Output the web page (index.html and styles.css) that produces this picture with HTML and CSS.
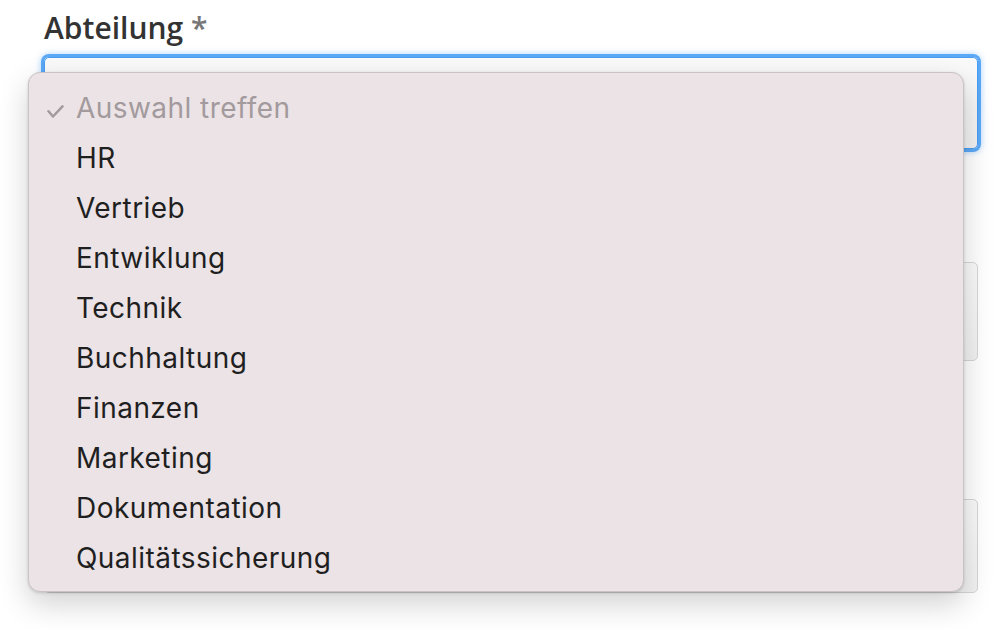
FILE: index.html
```html
<!DOCTYPE html>
<html lang="de">
<head>
<meta charset="utf-8">
<title>Abteilung</title>
<link rel="stylesheet" href="styles.css">
</head>
<body>
<form class="form">
  <div class="field">
    <label class="label">Abteilung <span class="req">*</span></label>
    <div class="box box-focus"></div>
  </div>
  <div class="field field-2">
    <div class="box"></div>
  </div>
  <div class="field field-3">
    <div class="box"></div>
  </div>
  <ul class="menu">
    <li class="item item-placeholder"><svg class="check" viewBox="0 0 17 13" width="17" height="13"><polyline points="1.5,6.2 6,11.5 15.5,1.3" fill="none" stroke="#a29a9d" stroke-width="2.5" stroke-linecap="round" stroke-linejoin="round"/></svg>Auswahl treffen</li>
    <li class="item">HR</li>
    <li class="item">Vertrieb</li>
    <li class="item">Entwiklung</li>
    <li class="item">Technik</li>
    <li class="item">Buchhaltung</li>
    <li class="item">Finanzen</li>
    <li class="item">Marketing</li>
    <li class="item">Dokumentation</li>
    <li class="item">Qualitätssicherung</li>
  </ul>
</form>
</body>
</html>
```
FILE: styles.css
```css
html, body {
  margin: 0;
  padding: 0;
  background: #ffffff;
}
.form {
  position: relative;
  width: 998px;
  height: 628px;
  overflow: hidden;
  padding: 8px 20px 0 44px;
  box-sizing: border-box;
}
.field {
  display: flex;
  flex-direction: column;
}
.label {
  font-family: "Open Sans", sans-serif;
  font-weight: 600;
  font-size: 30px;
  line-height: 40px;
  color: #333333;
  margin-bottom: 9px;
}
.req {
  color: #777777;
}
.box {
  height: 92px;
  border: 1px solid #d6d6d6;
  border-radius: 5px;
  background: linear-gradient(#fafafa, #f1f1f1);
  box-sizing: border-box;
}
.box-focus {
  border-color: #4a9cf0;
  box-shadow: 0 0 0 3px #5aa8f6, 0 0 6px 3px rgba(90,168,246,0.5);
}
.field-2 {
  margin-top: 113px;
}
.field-2 .box {
  height: 99px;
}
.field-3 {
  margin-top: 138px;
}
.field-3 .box {
  height: 94px;
}
.menu {
  position: absolute;
  left: 28px;
  top: 72px;
  width: 936px;
  height: 520px;
  margin: 0;
  padding: 10px 0 10px;
  box-sizing: border-box;
  list-style: none;
  background: #ece3e6;
  border: 1px solid #c9c3c5;
  border-radius: 12px;
  box-shadow: 0 12px 30px rgba(0,0,0,0.18), 0 1px 3px rgba(0,0,0,0.15);
}
.item {
  position: relative;
  height: 50px;
  line-height: 50px;
  padding-left: 47px;
  font-family: "Inter", sans-serif;
  font-size: 28px;
  letter-spacing: 0.45px;
  color: #1f1f1f;
}
.item-placeholder {
  color: #a29a9d;
}
.check {
  position: absolute;
  left: 18px;
  top: 22px;
}
```
